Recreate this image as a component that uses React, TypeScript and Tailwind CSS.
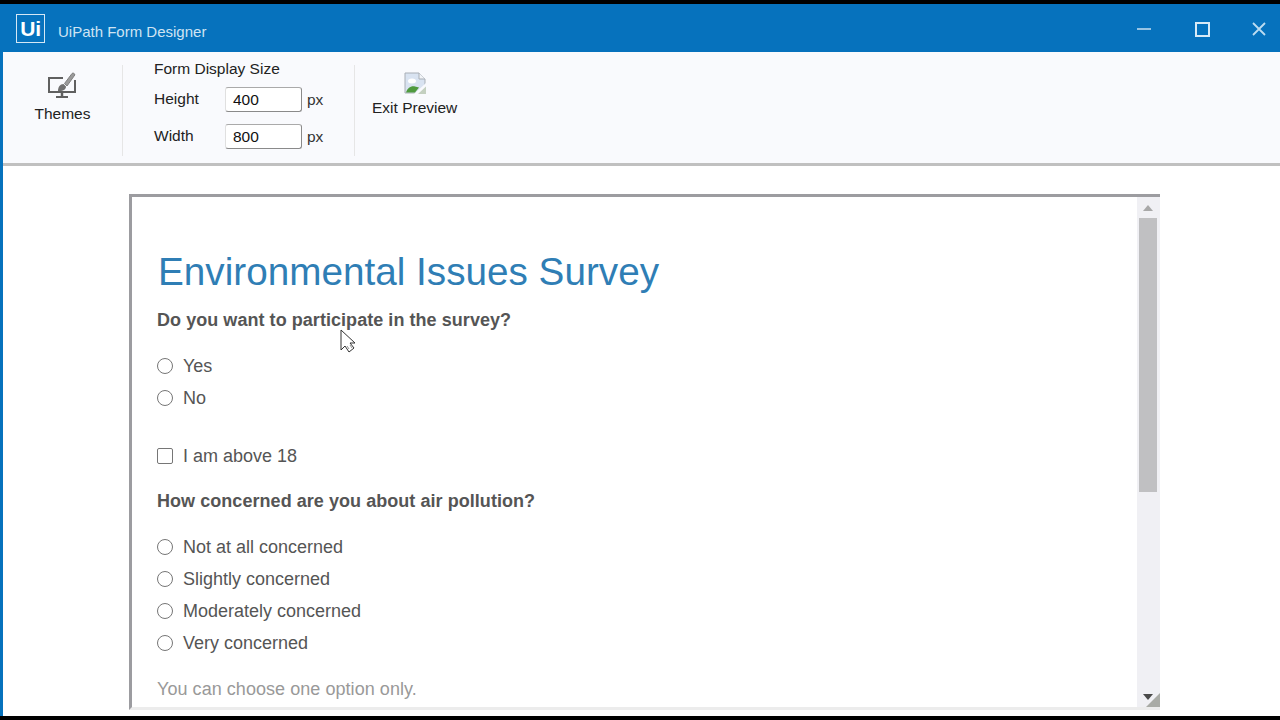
import React from "react";

const Radio = ({ label }: { label: string }) => (
  <div className="flex items-center h-[32px]">
    <span className="w-[16px] h-[16px] rounded-full border-[1.5px] border-[#767676] bg-white shrink-0" />
    <span className="ml-[10px] text-[18px] text-[#555555]">{label}</span>
  </div>
);

const Field = ({ label, value, top }: { label: string; value: string; top: string }) => (
  <div className={`flex items-center h-[26px] ${top}`}>
    <span className="w-[71px] text-[15.5px] text-[#222222] mb-[3px]">{label}</span>
    <div className="w-[77px] h-[25px] -mt-[1px] rounded-[3px] border border-[#8a8a8a] border-l-[#e0e0e0] border-t-[#aaaaaa] bg-white pl-[7px] text-[15.5px] leading-[23px] text-[#111111]">
      {value}
    </div>
    <span className="ml-[5px] text-[15.5px] text-[#333333]">px</span>
  </div>
);

export default function App() {
  return (
    <div className="w-[1280px] h-[720px] bg-black flex flex-col pt-[4px] pb-[4px] overflow-hidden font-['Liberation_Sans',Arial,sans-serif]">
      <div className="flex-1 flex flex-col border-l-[3px] border-[#0672bd] bg-white min-h-0">
        {/* Title bar */}
        <div className="h-[48px] bg-[#0672bd] flex items-center shrink-0 -ml-[3px] pl-[16px] text-white">
          <div className="w-[29px] h-[29px] border border-[#d5e8f5] flex items-center justify-center text-[21px] font-bold leading-none tracking-[-0.3px]">
            Ui
          </div>
          <span className="ml-[13px] mt-[8px] text-[15px] text-[#cfe4f3]">UiPath Form Designer</span>
          <div className="ml-auto mt-[2px] flex items-center">
            <svg width="16" height="16" viewBox="0 0 16 16" className="mr-[43px]">
              <path d="M1 8h14" stroke="#e6f1f9" strokeWidth="1.3" />
            </svg>
            <div className="w-[15px] h-[15px] border-2 border-[#d8eaf6] mr-[41px]" />
            <svg width="16" height="16" viewBox="0 0 16 16" className="mr-[13px]">
              <path d="M2 2l12 12M14 2L2 14" stroke="#bcdcf1" strokeWidth="1.8" />
            </svg>
          </div>
        </div>

        {/* Toolbar */}
        <div className="h-[114px] shrink-0 bg-[#f9fafd] border-b-[3px] border-[#c0c0c0] flex">
          <div className="w-[120px] h-[91px] mt-[13px] border-r border-[#e6e6e6] flex flex-col items-center shrink-0">
            <svg width="28" height="26" viewBox="0 0 28 26" className="mt-[7px] shrink-0 -ml-[1px]">
              <path d="M15 6H1v14h26V8" fill="none" stroke="#606060" strokeWidth="2" />
              <path d="M14 20v4" stroke="#606060" strokeWidth="2.500" />
              <path d="M8 25h12" stroke="#606060" strokeWidth="2" />
              <path d="M10 19c0-4 2-7 5.500-7l2.500 2.500c0 3-3 5-8 4.500z" fill="#707070" />
              <path d="M16.500 11.500L24 1.500c1-1 3 0 2.800 1.500L19 14z" fill="#9a9a9a" stroke="#808080" strokeWidth="1" />
            </svg>
            <span className="mt-[4px] text-[15.5px] text-[#222222]">Themes</span>
          </div>
          <div className="w-[232px] h-[91px] mt-[13px] border-r border-[#e6e6e6] pl-[31px] shrink-0">
            <div className="text-[15.5px] leading-[20px] -mt-[6px] text-[#222222]">Form Display Size</div>
            <Field label="Height" value="400" top="mt-[8px]" />
            <Field label="Width" value="800" top="mt-[11px]" />
          </div>
          <div className="ml-[17px] flex flex-col items-center pt-[20px]">
            <svg width="22" height="22" viewBox="0 0 22 22" className="shrink-0">
              <path d="M1 1h14l6 6v14H1z" fill="#d9e3f1" stroke="#a9afb6" />
              <path d="M15 1v6h6" fill="#f2f4f7" stroke="#a9afb6" />
              <ellipse cx="8" cy="9" rx="4" ry="2.500" fill="#ffffff" />
              <path d="M2 20.500c1-4 5-7 9-6l4 1-4 5z" fill="#4f9a3e" />
              <path d="M10 22L22 11v11z" fill="#f9fafd" />
              <path d="M14 22l8-7.500V22z" fill="#c4d0c0" />
            </svg>
            <span className="mt-[2px] text-[15.5px] text-[#222222]">Exit Preview</span>
          </div>
        </div>

        {/* Canvas */}
        <div className="flex-1 min-h-0 pl-[126px] pt-[28px] pb-[6px]">
          <div className="relative w-[1031px] h-full border-l-[3px] border-t-[3px] border-b-[3px] border-[#9c9ca0] border-b-[#ececec] flex bg-white">
            <div className="flex-1 pl-[25px] min-w-0 overflow-hidden">
              <h1 className="mt-[52px] ml-[1px] text-[38.7px] leading-[45px] text-[#2f7eb5]">Environmental Issues Survey</h1>
              <p className="mt-[15px] text-[18px] leading-[23px] font-bold text-[#555555] tracking-[0.05px]">Do you want to participate in the survey?</p>
              <div className="mt-[18px]">
                <Radio label="Yes" />
                <Radio label="No" />
              </div>
              <div className="flex items-center h-[32px] mt-[26px]">
                <span className="w-[16px] h-[16px] rounded-[2px] border-[1.5px] border-[#767676] bg-white shrink-0" />
                <span className="ml-[10px] text-[18px] text-[#555555]">I am above 18</span>
              </div>
              <p className="mt-[17px] text-[18px] leading-[24px] font-bold text-[#555555] tracking-[0.05px]">How concerned are you about air pollution?</p>
              <div className="mt-[18px]">
                <Radio label="Not at all concerned" />
                <Radio label="Slightly concerned" />
                <Radio label="Moderately concerned" />
                <Radio label="Very concerned" />
              </div>
              <p className="mt-[18px] text-[18px] leading-[24px] text-[#999999] tracking-[0.05px]">You can choose one option only.</p>
            </div>
            {/* Scrollbar */}
            <div className="w-[23px] shrink-0 bg-[#f0f0f4] flex flex-col items-center pr-[1px]">
              <svg width="10" height="6" viewBox="0 0 10 6" className="mt-[8px] shrink-0">
                <path d="M5 0l5 6H0z" fill="#a8a8a8" />
              </svg>
              <div className="w-[18px] h-[274px] mt-[7px] bg-[#c0c0c2] shrink-0" />
              <svg width="10" height="6" viewBox="0 0 10 6" className="mt-auto mb-[7px] shrink-0">
                <path d="M0 0h10L5 6z" fill="#4a4a4a" />
              </svg>
            </div>
            <svg width="14" height="14" viewBox="0 0 14 14" className="absolute right-0 bottom-0">
              <path d="M14 0v14H0z" fill="#a9aba6" />
            </svg>
            {/* Cursor */}
            <svg width="17" height="25" viewBox="0 0 17 25" className="absolute left-[208px] top-[132px]">
              <path d="M1 1v20l4-4 4 6 5-4-4-5h5z" fill="#ffffff" stroke="#333333" strokeWidth="1" />
              <path d="M7 17l2 3M10 16l2 3" stroke="#777777" strokeWidth="0.8" />
            </svg>
          </div>
        </div>
      </div>
    </div>
  );
}
